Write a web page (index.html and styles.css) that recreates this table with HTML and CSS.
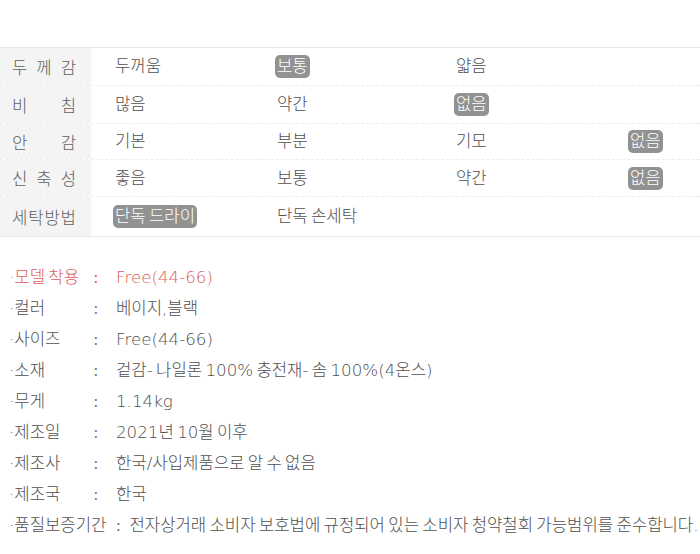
FILE: index.html
```html
<!DOCTYPE html>
<html lang="ko">
<head>
<meta charset="utf-8">
<link rel="stylesheet" href="styles.css">
</head>
<body>
<div class="page">
  <div class="spec">
    <div class="row">
      <div class="lbl"><span>두</span><span>께</span><span>감</span></div>
      <div class="cell"><span class="opt">두꺼움</span></div>
      <div class="cell"><span class="opt on">보통</span></div>
      <div class="cell"><span class="opt">얇음</span></div>
      <div class="cell"></div>
    </div>
    <div class="row">
      <div class="lbl"><span>비</span><span>침</span></div>
      <div class="cell"><span class="opt">많음</span></div>
      <div class="cell"><span class="opt">약간</span></div>
      <div class="cell"><span class="opt on">없음</span></div>
      <div class="cell"></div>
    </div>
    <div class="row">
      <div class="lbl"><span>안</span><span>감</span></div>
      <div class="cell"><span class="opt">기본</span></div>
      <div class="cell"><span class="opt">부분</span></div>
      <div class="cell"><span class="opt">기모</span></div>
      <div class="cell"><span class="opt on">없음</span></div>
    </div>
    <div class="row">
      <div class="lbl"><span>신</span><span>축</span><span>성</span></div>
      <div class="cell"><span class="opt">좋음</span></div>
      <div class="cell"><span class="opt">보통</span></div>
      <div class="cell"><span class="opt">약간</span></div>
      <div class="cell"><span class="opt on">없음</span></div>
    </div>
    <div class="row">
      <div class="lbl"><span>세</span><span>탁</span><span>방</span><span>법</span></div>
      <div class="cell"><span class="opt on">단독 드라이</span></div>
      <div class="cell"><span class="opt">단독 손세탁</span></div>
      <div class="cell"></div>
      <div class="cell"></div>
    </div>
  </div>

  <ul class="info">
    <li class="item red"><span class="k">·모델 착용</span><span class="c">:</span><span class="v">Free(44-66)</span></li>
    <li class="item"><span class="k">·컬러</span><span class="c">:</span><span class="v">베이지,블랙</span></li>
    <li class="item"><span class="k">·사이즈</span><span class="c">:</span><span class="v">Free(44-66)</span></li>
    <li class="item"><span class="k">·소재</span><span class="c">:</span><span class="v">겉감- 나일론 100% 충전재- 솜 100%(4온스)</span></li>
    <li class="item"><span class="k">·무게</span><span class="c">:</span><span class="v">1.14kg</span></li>
    <li class="item"><span class="k">·제조일</span><span class="c">:</span><span class="v">2021년 10월 이후</span></li>
    <li class="item"><span class="k">·제조사</span><span class="c">:</span><span class="v">한국/사입제품으로 알 수 없음</span></li>
    <li class="item"><span class="k">·제조국</span><span class="c">:</span><span class="v">한국</span></li>
    <li class="item tight"><span class="k">·품질보증기간</span><span class="c">:</span><span class="v">전자상거래 소비자 보호법에 규정되어 있는 소비자 청약철회 가능범위를 준수합니다.</span></li>
  </ul>
</div>
</body>
</html>
```

FILE: styles.css
```css
html, body {
  margin: 0;
  padding: 0;
  background: #fff;
}
body {
  font-family: "DejaVu Sans", "Noto Sans CJK KR", sans-serif;
  font-weight: 300;
  font-size: 16.7px;
  word-spacing: -2px;
  color: #4f4f4f;
}
.page {
  width: 700px;
  padding-top: 47px;
}
.spec {
  border-top: 1px solid #e6e6e6;
  border-bottom: 1px solid #e6e6e6;
}
.row {
  display: grid;
  grid-template-columns: 91px 162px 179px 174px 1fr;
  height: 37px;
  border-bottom: 1px dashed #ececec;
}
.row:nth-child(3) {
  height: 35px;
}
.row:nth-child(4) {
  height: 36px;
}
.row:last-child {
  height: 39px;
  border-bottom: none;
}
.lbl {
  background: #f4f4f4;
  display: flex;
  justify-content: space-between;
  align-items: center;
  padding: 0 15px 0 12px;
  color: #606060;
}
.cell {
  display: flex;
  align-items: center;
  padding-left: 22px;
}
.opt {
  display: inline-block;
  padding: 0 2px;
  height: 23px;
  line-height: 23px;
  border-radius: 5px;
}
.opt.on {
  background: #929292;
  color: #fff;
}
.info {
  list-style: none;
  margin: 0;
  padding: 25px 0 0 9px;
}
.item {
  display: flex;
  height: 31px;
  line-height: 31px;
  white-space: nowrap;
}
.item .k {
  min-width: 84px;
}
.item .c {
  width: 23px;
  text-align: left;
  font-weight: 400;
  color: #777;
}
.item.red {
  color: #e05d5d;
}
.item.red .c {
  color: #e05d5d;
}
.item.tight .k {
  min-width: 0;
  margin-right: 9px;
}
.item.tight .c {
  width: 14px;
}
```
